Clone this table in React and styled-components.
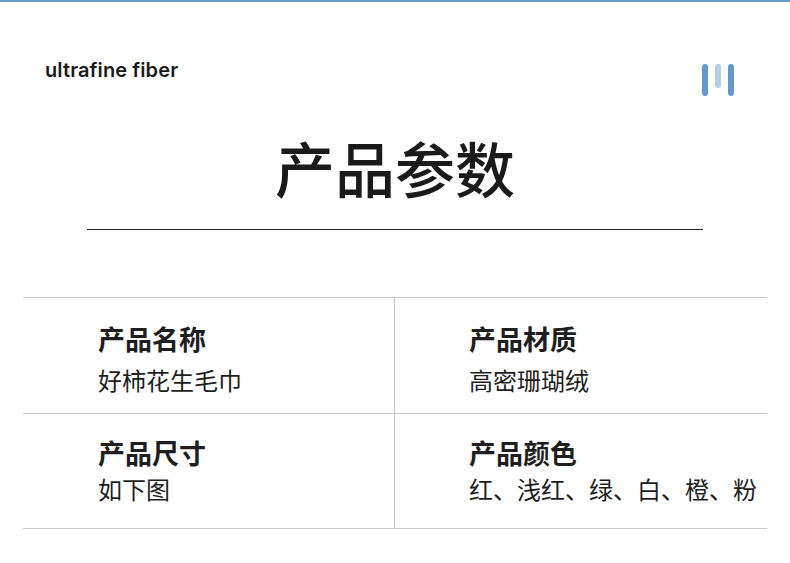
import React from "react";
import styled, { createGlobalStyle } from "styled-components";

const Global = createGlobalStyle`
  html, body { margin: 0; padding: 0; background: #ffffff; }
  body { font-family: "Noto Sans CJK SC", "Noto Sans", sans-serif; color: #1e1e1e; }
`;

const Page = styled.div`
  width: 790px;
  height: 563px;
  background: #ffffff;
  overflow: hidden;
`;

const TopBar = styled.div`
  height: 2px;
  background: #6a99c5;
`;

const Header = styled.header`
  display: flex;
  justify-content: space-between;
  align-items: flex-start;
  padding: 56px 56px 0 45px;
  height: 40px;
`;

const Brand = styled.div`
  font-family: "Inter", "Noto Sans", sans-serif;
  font-weight: 600;
  font-size: 20px;
  line-height: 24px;
  color: #1a1a1a;
  letter-spacing: 0.1px;
`;

const Bars = styled.div`
  display: flex;
  gap: 7px;
  align-items: flex-start;
  padding-top: 6px;
`;

const Bar = styled.span`
  display: block;
  width: 6px;
  height: ${(p) => p.$h}px;
  border-radius: 3px;
  background: ${(p) => (p.$light ? "#b4cce4" : "#6598c8")};
`;

const Title = styled.h1`
  margin: 0;
  padding-top: 29px;
  text-align: center;
  font-family: "Noto Sans CJK SC", sans-serif;
  font-weight: 500;
  font-size: 60px;
  line-height: 80px;
  color: #1a1a1a;
`;

const Rule = styled.div`
  margin: 22px 87px 0;
  height: 1px;
  background: #222222;
`;

const Table = styled.div`
  margin: 67px 23px 0;
  display: grid;
  grid-template-columns: 371px 1fr;
  grid-template-rows: 116px 115px;
  border-top: 1px solid #cacaca;
`;

const Cell = styled.div`
  box-sizing: border-box;
  border-bottom: 1px solid #cacaca;
  border-left: ${(p) => (p.$divider ? "1px solid #c4c4c4" : "none")};
  padding: ${(p) => p.$pt}px 0 0 ${(p) => (p.$divider ? 74 : 75)}px;
  white-space: nowrap;
`;

const Label = styled.div`
  font-weight: 700;
  font-size: 27px;
  line-height: 36px;
  color: #1e1e1e;
`;

const Value = styled.div`
  font-weight: 400;
  font-size: 24px;
  line-height: 32px;
  color: #1e1e1e;
  margin-top: ${(p) => p.$mt}px;
`;

const rows = [
  [
    { label: "产品名称", value: "好柿花生毛巾", pt: 23, mt: 7 },
    { label: "产品材质", value: "高密珊瑚绒", pt: 23, mt: 7 },
  ],
  [
    { label: "产品尺寸", value: "如下图", pt: 21, mt: 2 },
    { label: "产品颜色", value: "红、浅红、绿、白、橙、粉", pt: 21, mt: 2 },
  ],
];

export default function App() {
  return (
    <Page>
      <Global />
      <TopBar />
      <Header>
        <Brand>ultrafine fiber</Brand>
        <Bars>
          <Bar $h={32} />
          <Bar $h={24} $light />
          <Bar $h={32} />
        </Bars>
      </Header>
      <Title>产品参数</Title>
      <Rule />
      <Table>
        {rows.flatMap((row, r) =>
          row.map((c, i) => (
            <Cell key={`${r}-${i}`} $divider={i === 1} $pt={c.pt}>
              <Label>{c.label}</Label>
              <Value $mt={c.mt}>{c.value}</Value>
            </Cell>
          ))
        )}
      </Table>
    </Page>
  );
}
